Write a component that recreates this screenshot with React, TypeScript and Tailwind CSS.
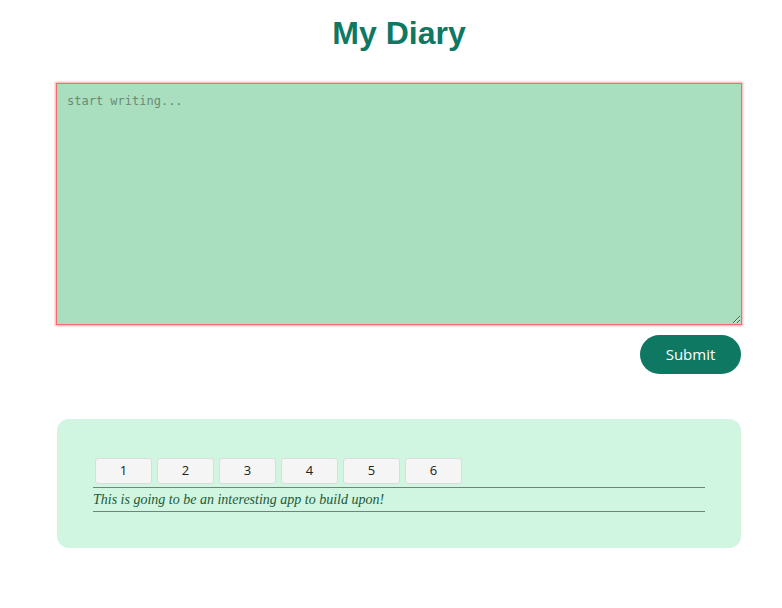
import { useState } from 'react';

const pages = [1, 2, 3, 4, 5, 6];

export default function App() {
  const [text, setText] = useState('');

  return (
    <div className="min-h-screen bg-white pl-[56px] pr-[40px]">
      {/* Header */}
      <h1 className="pt-[13px] text-center text-[32px] leading-[40px] font-bold text-[#0f7862] [font-family:'Liberation_Sans',Arial,sans-serif]">
        My Diary
      </h1>

      {/* Entry form */}
      <div className="mt-[30px] flex flex-col">
        <textarea
          value={text}
          onChange={(e) => setText(e.target.value)}
          placeholder="start writing..."
          className="block h-[242px] w-full border border-[#f76b6b] bg-[#a9dfbf] px-[10px] py-[9px] text-[12px] leading-[16px] text-[#1f3b2d] shadow-[0_0_2px_1px_rgba(248,113,113,0.6)] outline-none placeholder:text-[#6a8b78] [font-family:'DejaVu_Sans_Mono',monospace]"
        />
        <div className="mt-[10px] mr-px flex justify-end">
          <button className="h-[39px] w-[101px] rounded-full bg-[#0f7862] text-[15px] text-white [font-family:'Open_Sans',sans-serif]">
            Submit
          </button>
        </div>
      </div>

      {/* Entries */}
      <div className="mt-[45px] mx-px rounded-xl bg-[#d0f5e0] px-9 pt-[39px] pb-[36px]">
        <div className="ml-[2px] flex gap-[5px]">
          {pages.map((p) => (
            <button
              key={p}
              className="h-[26px] w-[57px] rounded-[3px] border border-[#dcdcdc] bg-[#f5f5f5] text-[13px] text-[#222] [font-family:'Open_Sans',sans-serif]"
            >
              {p}
            </button>
          ))}
        </div>
        <p className="mt-[3px] border-y border-[#6f857a] text-[14px] leading-[23px] italic text-[#1a5a3a] [font-family:'Liberation_Serif',serif]">
          This is going to be an interesting app to build upon!
        </p>
      </div>
    </div>
  );
}
